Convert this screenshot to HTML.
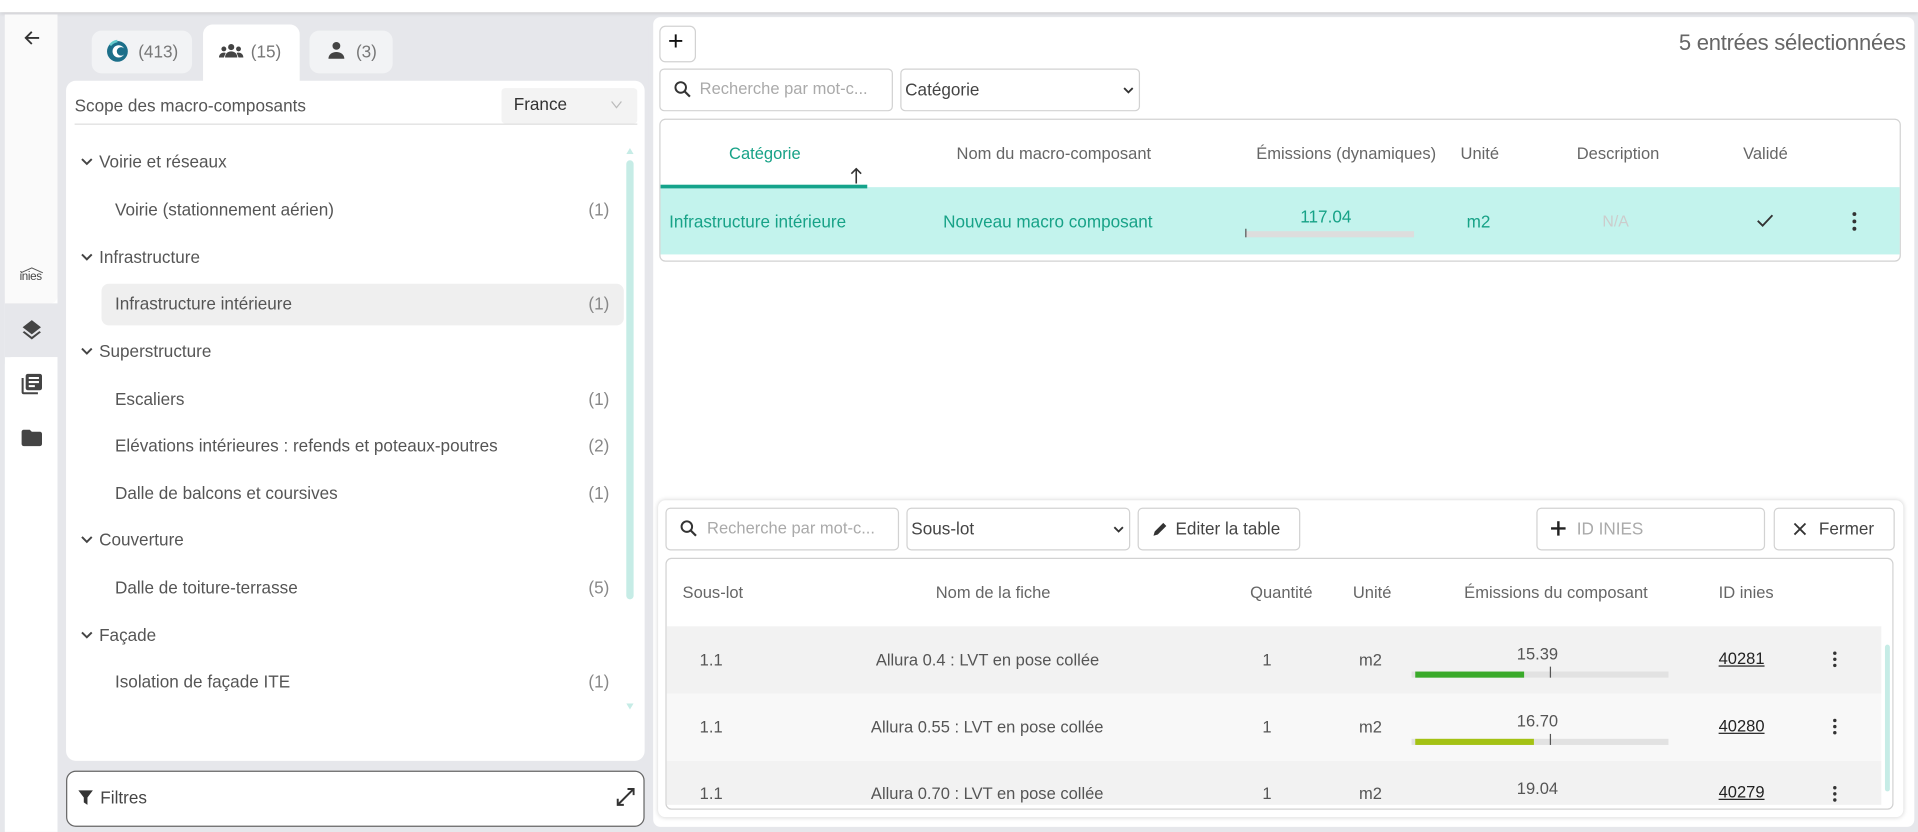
<!DOCTYPE html>
<html><head><meta charset="utf-8">
<style>
*{box-sizing:border-box;margin:0;padding:0}
html,body{width:1918px;height:832px;overflow:hidden;background:#e6e7eb}
#w{position:absolute;left:0;top:0;width:1568px;height:680px;transform:scale(1.22321);transform-origin:0 0;font-family:"Liberation Sans",sans-serif;font-size:13.5px;color:#555}
.a{position:absolute}
.t{position:absolute;white-space:nowrap}
.box{position:absolute;border:1px solid #d2d2d2;border-radius:4px;background:#fff}
.cnt{position:absolute;color:#888}
.chev{position:absolute;left:66px}
</style></head><body><div id="w">
<div class="a" style="left:0;top:0;width:1568px;height:10px;background:#fff;box-shadow:0 1px 3px rgba(0,0,0,.12)"></div>
<!-- sidebar -->
<div class="a" style="left:4px;top:12px;width:43px;height:668px;background:#fff"></div>
<div class="a" style="left:4px;top:12px;width:43px;height:236px;background:#fafafa;border-radius:0 0 6px 0"></div>
<div class="a" style="left:4px;top:248px;width:43px;height:44px;background:#e6e7eb"></div>
<div class="a" style="left:4px;top:292px;width:43px;height:388px;background:#fff;border-radius:6px 0 0 0"></div>
<svg class="a" style="left:19px;top:24px" width="14" height="14" viewBox="0 0 14 14"><path d="M13 7H2M7 2L2 7l5 5" fill="none" stroke="#333" stroke-width="1.5"/></svg>
<svg class="a" style="left:16px;top:218px" width="20" height="6" viewBox="0 0 20 6"><path d="M1 5L10 1l9 4" fill="none" stroke="#555" stroke-width="0.8"/></svg>
<div class="t" style="left:16px;top:221px;font-size:9.5px;color:#444;letter-spacing:-0.3px">inies</div>
<svg class="a" style="left:16px;top:260px" width="20" height="20" viewBox="0 0 24 24"><path fill="#444" d="M12 16.5l-7.4-5.7L3 12l9 7 9-7-1.6-1.2zM12 14l7.4-5.7L21 7l-9-7-9 7 1.6 1.3z" transform="translate(0,2)"/></svg>
<svg class="a" style="left:16px;top:304px" width="20" height="20" viewBox="0 0 24 24"><path fill="#444" d="M4 6H2v14c0 1.1.9 2 2 2h14v-2H4V6zm16-4H8c-1.1 0-2 .9-2 2v12c0 1.1.9 2 2 2h12c1.1 0 2-.9 2-2V4c0-1.1-.9-2-2-2zm-1 9H9V9h10v2zm-4 4H9v-2h6v2zm4-8H9V5h10v2z"/></svg>
<svg class="a" style="left:16px;top:348px" width="20" height="20" viewBox="0 0 24 24"><path fill="#444" d="M10 4H4c-1.1 0-2 .9-2 2v12c0 1.1.9 2 2 2h16c1.1 0 2-.9 2-2V8c0-1.1-.9-2-2-2h-8l-2-2z"/></svg>
<!-- left panel -->
<div class="a" style="left:52px;top:14px;width:478px;height:610px;background:#e6e7eb;border-radius:8px"></div>
<div class="a" style="left:75px;top:25px;width:82px;height:35px;background:#f2f3f5;border-radius:8px"></div>
<svg class="a" style="left:86px;top:32px" width="20" height="20" viewBox="0 0 20 20"><circle cx="10" cy="10" r="8.5" fill="#1c6f8a"/><circle cx="11" cy="10" r="5" fill="#fff"/><circle cx="13" cy="10" r="3.5" fill="#1c6f8a"/><path d="M4 5a9 9 0 0 1 6-3.5" stroke="#6cc" stroke-width="2" fill="none"/></svg>
<div class="t" style="left:113px;top:34px;font-size:14px;color:#777">(413)</div>
<div class="a" style="left:166px;top:20px;width:79px;height:50px;background:#fff;border-radius:8px 8px 0 0"></div>
<svg class="a" style="left:179px;top:35px" width="20" height="14" viewBox="0 0 20 14"><circle cx="10" cy="3.5" r="2.5" fill="#444"/><circle cx="4" cy="5" r="2" fill="#444"/><circle cx="16" cy="5" r="2" fill="#444"/><path d="M5 12c0-3 2-5 5-5s5 2 5 5zM0 12c0-2 1.5-4 4-4 1 0 1.5.3 1.5.3L4 12zM20 12c0-2-1.5-4-4-4-1 0-1.5.3-1.5.3L16 12z" fill="#444"/></svg>
<div class="t" style="left:205px;top:34px;font-size:14px;color:#777">(15)</div>
<div class="a" style="left:253px;top:25px;width:68px;height:35px;background:#f2f3f5;border-radius:8px"></div>
<svg class="a" style="left:267px;top:33px" width="16" height="16" viewBox="0 0 16 16"><circle cx="8" cy="4.5" r="3.2" fill="#444"/><path d="M1.5 15c0-3.5 3-5.5 6.5-5.5s6.5 2 6.5 5.5z" fill="#444"/></svg>
<div class="t" style="left:291px;top:34px;font-size:14px;color:#777">(3)</div>
<div class="a" style="left:54px;top:66px;width:473px;height:556px;background:#fff;border-radius:8px"></div>
<div class="t" style="left:61px;top:78px;font-size:14px;color:#555">Scope des macro-composants</div>
<div class="a" style="left:410px;top:72px;width:111px;height:29px;background:#f3f3f3;border-radius:3px"></div>
<div class="t" style="left:420px;top:77px;font-size:14px;color:#333">France</div>
<svg class="a" style="left:499px;top:82px" width="10" height="7" viewBox="0 0 10 7"><path d="M1 1l4 5 4-5" fill="none" stroke="#bbb" stroke-width="1"/></svg>
<div class="a" style="left:61px;top:101px;width:460px;height:1px;background:#ddd"></div>
<div class="a" style="left:512px;top:131px;width:6px;height:359px;background:#c6ece6;border-radius:3px"></div>
<svg class="a" style="left:512px;top:121px" width="6" height="5"><path d="M0 5L3 0l3 5z" fill="#c6ece6"/></svg>
<svg class="a" style="left:512px;top:575px" width="6" height="5"><path d="M0 0l3 5 3-5z" fill="#c6ece6"/></svg>
<div class="a" style="left:83px;top:232px;width:427px;height:34px;background:#efefef;border-radius:6px"></div>
<svg class="chev" style="top:129px" width="10" height="7" viewBox="0 0 10 7"><path d="M1 1l4 4 4-4" fill="none" stroke="#444" stroke-width="1.6"/></svg>
<svg class="chev" style="top:207px" width="10" height="7" viewBox="0 0 10 7"><path d="M1 1l4 4 4-4" fill="none" stroke="#444" stroke-width="1.6"/></svg>
<svg class="chev" style="top:284px" width="10" height="7" viewBox="0 0 10 7"><path d="M1 1l4 4 4-4" fill="none" stroke="#444" stroke-width="1.6"/></svg>
<svg class="chev" style="top:438px" width="10" height="7" viewBox="0 0 10 7"><path d="M1 1l4 4 4-4" fill="none" stroke="#444" stroke-width="1.6"/></svg>
<svg class="chev" style="top:516px" width="10" height="7" viewBox="0 0 10 7"><path d="M1 1l4 4 4-4" fill="none" stroke="#444" stroke-width="1.6"/></svg>
<div style="position:absolute;left:0;top:0;width:540px;font-size:14px">
<div class="t" style="left:81px;top:124px">Voirie et réseaux</div>
<div class="t" style="left:94px;top:163px">Voirie (stationnement aérien)</div><div class="t cnt" style="top:163px;left:481px">(1)</div>
<div class="t" style="left:81px;top:202px">Infrastructure</div>
<div class="t" style="left:94px;top:240px">Infrastructure intérieure</div><div class="t cnt" style="top:240px;left:481px">(1)</div>
<div class="t" style="left:81px;top:279px">Superstructure</div>
<div class="t" style="left:94px;top:318px">Escaliers</div><div class="t cnt" style="top:318px;left:481px">(1)</div>
<div class="t" style="left:94px;top:356px">Elévations intérieures : refends et poteaux-poutres</div><div class="t cnt" style="top:356px;left:481px">(2)</div>
<div class="t" style="left:94px;top:395px">Dalle de balcons et coursives</div><div class="t cnt" style="top:395px;left:481px">(1)</div>
<div class="t" style="left:81px;top:433px">Couverture</div>
<div class="t" style="left:94px;top:472px">Dalle de toiture-terrasse</div><div class="t cnt" style="top:472px;left:481px">(5)</div>
<div class="t" style="left:81px;top:511px">Façade</div>
<div class="t" style="left:94px;top:549px">Isolation de façade ITE</div><div class="t cnt" style="top:549px;left:481px">(1)</div>
</div>
<div class="a" style="left:54px;top:630px;width:473px;height:46px;background:#fff;border:1px solid #666;border-radius:8px"></div>
<svg class="a" style="left:64px;top:646px" width="12" height="12" viewBox="0 0 12 12"><path d="M0 0h12L7.5 6v6L4.5 10V6z" fill="#333"/></svg>
<div class="t" style="left:82px;top:644px;font-size:14px;color:#444">Filtres</div>
<svg class="a" style="left:504px;top:644px" width="15" height="15" viewBox="0 0 15 15"><path d="M1 14L14 1M9 1h5v5M1 9v5h5" fill="none" stroke="#333" stroke-width="1.6"/></svg>
<!-- right panel -->
<div class="a" style="left:534px;top:14px;width:1031px;height:662px;background:#fff;border-radius:6px"></div>
<div class="box" style="left:539px;top:21px;width:30px;height:30px;border-radius:5px"></div>
<div class="t" style="left:546px;top:21px;font-size:22px;color:#111">+</div>
<div class="t" style="right:10px;top:25px;font-size:18px;color:#666;left:auto;letter-spacing:-0.2px">5 entrées sélectionnées</div>
<div class="box" style="left:539px;top:56px;width:191px;height:35px"></div>
<svg class="a" style="left:551px;top:66px" width="14" height="14" viewBox="0 0 14 14"><circle cx="5.5" cy="5.5" r="4.3" fill="none" stroke="#333" stroke-width="1.6"/><path d="M8.6 8.6L13 13" stroke="#333" stroke-width="1.8"/></svg>
<div class="t" style="left:572px;top:65px;color:#aaa">Recherche par mot-c...</div>
<div class="box" style="left:736px;top:56px;width:196px;height:35px"></div>
<div class="t" style="left:740px;top:65px;font-size:14px;color:#444">Catégorie</div>
<svg class="a" style="left:918px;top:71px" width="9" height="6" viewBox="0 0 9 6"><path d="M1 1l3.5 3.5L8 1" fill="none" stroke="#333" stroke-width="1.5"/></svg>
<div class="box" style="left:539px;top:97px;width:1015px;height:117px;border-radius:5px;overflow:hidden">
 <div class="a" style="left:0;top:55px;width:1015px;height:55px;background:#c3f3ed"></div>
 <div class="a" style="left:0;top:53px;width:169px;height:3px;background:#14a38b"></div>
</div>
<div class="t" style="left:596px;top:118px;color:#17a287">Catégorie</div>
<svg class="a" style="left:695px;top:137px" width="10" height="13" viewBox="0 0 10 13"><path d="M5 13V1M1 5l4-4 4 4" fill="none" stroke="#333" stroke-width="1.3"/></svg>
<div class="t" style="left:782px;top:118px;color:#666">Nom du macro-composant</div>
<div class="t" style="left:1027px;top:118px;color:#666">Émissions (dynamiques)</div>
<div class="t" style="left:1194px;top:118px;color:#666">Unité</div>
<div class="t" style="left:1289px;top:118px;color:#666">Description</div>
<div class="t" style="left:1425px;top:118px;color:#666">Validé</div>
<div class="t" style="left:547px;top:173px;font-size:14px;color:#17a287">Infrastructure intérieure</div>
<div class="t" style="left:771px;top:173px;font-size:14px;color:#17a287">Nouveau macro composant</div>
<div class="t" style="left:1063px;top:169px;font-size:14px;color:#17a287">117.04</div>
<div class="a" style="left:1018px;top:189px;width:138px;height:5px;background:#ddd"></div>
<div class="a" style="left:1018px;top:187px;width:1px;height:7px;background:#555"></div>
<div class="t" style="left:1199px;top:173px;font-size:14px;color:#17a287">m2</div>
<div class="t" style="left:1310px;top:173px;font-size:13px;color:#ccc">N/A</div>
<svg class="a" style="left:1436px;top:175px" width="14" height="11" viewBox="0 0 14 11"><path d="M1 5.5l4 4L13 1" fill="none" stroke="#333" stroke-width="1.5"/></svg>
<svg class="a" style="left:1514px;top:173px" width="4" height="16" viewBox="0 0 4 16"><circle cx="2" cy="2" r="1.6" fill="#333"/><circle cx="2" cy="8" r="1.6" fill="#333"/><circle cx="2" cy="14" r="1.6" fill="#333"/></svg>
<!-- bottom panel -->
<div class="a" style="left:538px;top:409px;width:1018px;height:259px;background:#fff;border-radius:6px;box-shadow:0 0 4px rgba(0,0,0,.18)"></div>
<div class="box" style="left:544px;top:415px;width:191px;height:35px"></div>
<svg class="a" style="left:556px;top:425px" width="14" height="14" viewBox="0 0 14 14"><circle cx="5.5" cy="5.5" r="4.3" fill="none" stroke="#333" stroke-width="1.6"/><path d="M8.6 8.6L13 13" stroke="#333" stroke-width="1.8"/></svg>
<div class="t" style="left:578px;top:424px;color:#aaa">Recherche par mot-c...</div>
<div class="box" style="left:741px;top:415px;width:183px;height:35px"></div>
<div class="t" style="left:745px;top:424px;font-size:14px;color:#444">Sous-lot</div>
<svg class="a" style="left:910px;top:430px" width="9" height="6" viewBox="0 0 9 6"><path d="M1 1l3.5 3.5L8 1" fill="none" stroke="#333" stroke-width="1.5"/></svg>
<div class="box" style="left:930px;top:415px;width:133px;height:35px"></div>
<svg class="a" style="left:942px;top:426px" width="13" height="13" viewBox="0 0 13 13"><path d="M1 12l1-3.5L9 1.5l2.5 2.5L4.5 11z" fill="#333"/></svg>
<div class="t" style="left:961px;top:424px;font-size:14px;color:#444">Editer la table</div>
<div class="box" style="left:1256px;top:415px;width:187px;height:35px"></div>
<svg class="a" style="left:1268px;top:426px" width="12" height="12" viewBox="0 0 12 12"><path d="M6 0v12M0 6h12" stroke="#222" stroke-width="2"/></svg>
<div class="t" style="left:1289px;top:424px;font-size:14px;color:#aaa">ID INIES</div>
<div class="box" style="left:1450px;top:415px;width:99px;height:35px"></div>
<svg class="a" style="left:1466px;top:427px" width="11" height="11" viewBox="0 0 11 11"><path d="M1 1l9 9M10 1l-9 9" stroke="#333" stroke-width="1.5"/></svg>
<div class="t" style="left:1487px;top:424px;font-size:14px;color:#444">Fermer</div>
<div class="box" style="left:544px;top:456px;width:1004px;height:206px;border-radius:5px;overflow:hidden">
 <div class="a" style="left:0;top:55px;width:993px;height:55px;background:#f2f2f2"></div>
 <div class="a" style="left:0;top:110px;width:993px;height:55px;background:#f8f8f8"></div>
 <div class="a" style="left:0;top:165px;width:993px;height:36px;background:#f2f2f2"></div>
 <div class="a" style="left:996px;top:70px;width:4px;height:120px;background:#c6ece6;border-radius:2px"></div>
</div>
<div class="t" style="left:558px;top:477px;color:#666">Sous-lot</div>
<div class="t" style="left:765px;top:477px;color:#666">Nom de la fiche</div>
<div class="t" style="left:1022px;top:477px;color:#666">Quantité</div>
<div class="t" style="left:1106px;top:477px;color:#666">Unité</div>
<div class="t" style="left:1197px;top:477px;color:#666">Émissions du composant</div>
<div class="t" style="left:1405px;top:477px;color:#666">ID inies</div>
<div style="position:absolute;left:0;top:0;width:1568px;font-size:13.5px">
 <div class="t" style="left:572px;top:532px">1.1</div><div class="t" style="left:716px;top:532px">Allura 0.4 : LVT en pose collée</div><div class="t" style="left:1032px;top:532px">1</div><div class="t" style="left:1111px;top:532px">m2</div><div class="t" style="left:1240px;top:527px">15.39</div><div class="t" style="left:1405px;top:531px;color:#222;text-decoration:underline">40281</div>
 <div class="t" style="left:572px;top:587px">1.1</div><div class="t" style="left:712px;top:587px">Allura 0.55 : LVT en pose collée</div><div class="t" style="left:1032px;top:587px">1</div><div class="t" style="left:1111px;top:587px">m2</div><div class="t" style="left:1240px;top:582px">16.70</div><div class="t" style="left:1405px;top:586px;color:#222;text-decoration:underline">40280</div>
 <div class="t" style="left:572px;top:641px">1.1</div><div class="t" style="left:712px;top:641px">Allura 0.70 : LVT en pose collée</div><div class="t" style="left:1032px;top:641px">1</div><div class="t" style="left:1111px;top:641px">m2</div><div class="t" style="left:1240px;top:637px">19.04</div><div class="t" style="left:1405px;top:640px;color:#222;text-decoration:underline">40279</div>
</div>
<svg class="a" style="left:1498px;top:532px" width="4" height="14" viewBox="0 0 4 14"><circle cx="2" cy="2" r="1.4" fill="#333"/><circle cx="2" cy="7" r="1.4" fill="#333"/><circle cx="2" cy="12" r="1.4" fill="#333"/></svg>
<svg class="a" style="left:1498px;top:587px" width="4" height="14" viewBox="0 0 4 14"><circle cx="2" cy="2" r="1.4" fill="#333"/><circle cx="2" cy="7" r="1.4" fill="#333"/><circle cx="2" cy="12" r="1.4" fill="#333"/></svg>
<svg class="a" style="left:1498px;top:642px" width="4" height="14" viewBox="0 0 4 14"><circle cx="2" cy="2" r="1.4" fill="#333"/><circle cx="2" cy="7" r="1.4" fill="#333"/><circle cx="2" cy="12" r="1.4" fill="#333"/></svg>
<div class="a" style="left:1154px;top:549px;width:210px;height:5px;background:#e2e2e2"></div>
<div class="a" style="left:1157px;top:549px;width:89px;height:5px;background:#3aaa2a"></div>
<div class="a" style="left:1267px;top:545px;width:1px;height:9px;background:#555"></div>
<div class="a" style="left:1154px;top:604px;width:210px;height:5px;background:#e2e2e2"></div>
<div class="a" style="left:1157px;top:604px;width:97px;height:5px;background:#a4c214"></div>
<div class="a" style="left:1267px;top:600px;width:1px;height:9px;background:#555"></div>
</div></body></html>
